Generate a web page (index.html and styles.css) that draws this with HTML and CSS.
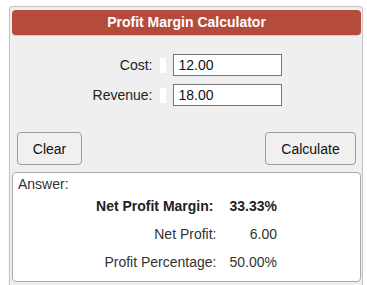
FILE: index.html
```html
<!DOCTYPE html>
<html>
<head>
<meta charset="utf-8">
<link rel="stylesheet" href="styles.css">
</head>
<body>
<div class="panel">
  <div class="header">Profit Margin Calculator</div>
  <div class="form">
    <label class="lbl">Cost:</label><span class="cur"></span><input class="inp" type="text" value="12.00">
    <label class="lbl">Revenue:</label><span class="cur"></span><input class="inp" type="text" value="18.00">
  </div>
  <div class="buttons">
    <button class="btn btn-clear">Clear</button>
    <button class="btn btn-calc">Calculate</button>
  </div>
  <div class="answer">
    <div class="answer-title">Answer:</div>
    <div class="results">
      <div class="rl strong">Net Profit Margin:</div><div class="rv strong">33.33%</div>
      <div class="rl">Net Profit:</div><div class="rv">6.00</div>
      <div class="rl">Profit Percentage:</div><div class="rv">50.00%</div>
    </div>
  </div>
</div>
</body>
</html>
```
FILE: styles.css
```css
html, body {
  margin: 0;
  padding: 0;
  background: #ffffff;
  font-family: "Liberation Sans", Arial, sans-serif;
  font-size: 14px;
  color: #222;
}
.panel {
  margin: 6px 0 0 9px;
  width: 349px;
  border: 1px solid #c4c4c4;
  border-radius: 3px;
  background: #efefef;
  padding: 3px 1px 8px 2px;
  box-shadow: 0 0 2px rgba(0,0,0,0.08);
}
.header {
  height: 25px;
  line-height: 25px;
  background: #b44b3b;
  color: #fff;
  font-weight: bold;
  font-size: 14px;
  text-align: center;
  border-radius: 4px;
  box-shadow: 0 1px 1px rgba(0,0,0,0.15);
}
.form {
  margin-top: 19px;
  display: grid;
  grid-template-columns: auto 14px 116px;
  row-gap: 8px;
  justify-content: center;
  align-items: center;
  padding-left: 2px;
}
.lbl {
  text-align: right;
  color: #222;
}
.cur {
  width: 6px;
  height: 15px;
  background: #fff;
  margin-left: 8px;
}
.inp {
  box-sizing: border-box;
  width: 109px;
  height: 22px;
  margin: 0 0 0 7px;
  border: 1px solid #767676;
  border-radius: 0;
  padding: 0 4px;
  font-family: "Liberation Sans", Arial, sans-serif;
  font-size: 14px;
  color: #111;
  background: #fff;
}
.buttons {
  margin-top: 26px;
  display: flex;
  justify-content: space-between;
  padding: 0 5px;
}
.btn {
  height: 33px;
  padding: 0;
  border: 1px solid #9c9c9c;
  border-radius: 4px;
  background: #f0f0f0;
  font-family: "Liberation Sans", Arial, sans-serif;
  font-size: 14px;
  color: #111;
  text-align: center;
}
.btn-clear {
  width: 65px;
}
.btn-calc {
  width: 91px;
}
.answer {
  margin-top: 7px;
  background: #fff;
  border: 1px solid #aaaaaa;
  border-radius: 4px;
  padding: 3px 5px 5px 5px;
}
.answer-title {
  line-height: 16px;
  color: #333;
}
.results {
  display: grid;
  grid-template-columns: auto auto;
  column-gap: 13px;
  justify-content: center;
}
.rl, .rv {
  line-height: 28px;
  color: #333;
}
.rl {
  text-align: right;
}
.rv {
  text-align: right;
}
.strong {
  font-weight: bold;
  color: #222;
}
.rl.strong {
  padding-right: 3px;
}
```
